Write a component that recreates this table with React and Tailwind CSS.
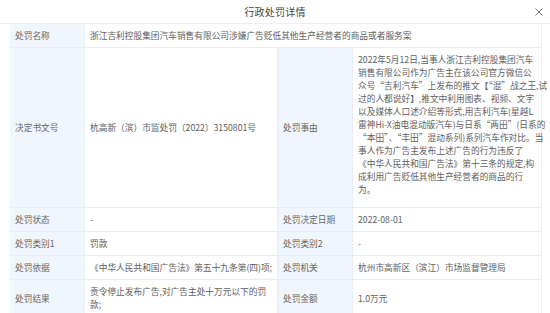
import React from "react";

const L = "bg-[#f0f6fd] text-[#666] px-[5px] py-[5px] border-b border-r border-[#e6edf5] flex items-center whitespace-nowrap";
const V = "bg-white text-[#606060] px-[5px] py-[5px] border-b border-r border-[#e6edf5] flex items-center whitespace-nowrap";

const reason = [
  "2022年5月12日,当事人浙江吉利控股集团汽车",
  "销售有限公司作为广告主在该公司官方微信公",
  "众号\u201c吉利汽车\u201d上发布的推文【\u201c混\u201d战之王,试",
  "过的人都说好】,推文中利用图表、视频、文字",
  "以及媒体人口述介绍等形式,用吉利汽车(星越L",
  "雷神Hi-X油电混动版汽车)与日系\u201c两田\u201d(日系的",
  "\u201c本田\u201d、\u201c丰田\u201d混动系列)系列汽车作对比。当",
  "事人作为广告主发布上述广告的行为违反了",
  "《中华人民共和国广告法》第十三条的规定,构",
  "成利用广告贬低其他生产经营者的商品的行",
  "为。",
];

export default function App() {
  return (
    <div
      className="w-[550px] h-[313px] bg-white overflow-hidden text-[8.7px] leading-[13px]"
      style={{ fontFamily: '"Noto Sans CJK SC", "Noto Sans", sans-serif' }}
    >
      <div className="h-[24px] border-b border-[#eceff3] grid grid-cols-[1fr_auto_1fr] items-center">
        <div />
        <div className="text-[10px] text-[#444] tracking-[0.2px]">行政处罚详情</div>
        <div className="flex justify-end pr-[7px]">
          <svg width="8" height="8" viewBox="0 0 8 8">
            <path d="M0.5 0.5 L7.5 7.5 M7.5 0.5 L0.5 7.5" stroke="#666" strokeWidth="0.9" fill="none" />
          </svg>
        </div>
      </div>
      <div className="pl-[10px] pr-[8px]">
        <div className="grid grid-cols-[75px_193px_75px_189px]">
          <div className={L}>处罚名称</div>
          <div className={V + " col-span-3"}>浙江吉利控股集团汽车销售有限公司涉嫌广告贬低其他生产经营者的商品或者服务案</div>

          <div className={L}>决定书文号</div>
          <div className={V}>杭高新（滨）市监处罚〔2022〕3150801号</div>
          <div className={L}>处罚事由</div>
          <div className="bg-white text-[#606060] px-[5px] pt-[5px] pb-[11px] border-b border-r border-[#e6edf5] whitespace-nowrap">
            {reason.map((t, i) => (
              <div key={i}>{t}</div>
            ))}
          </div>

          <div className={L}>处罚状态</div>
          <div className={V}>-</div>
          <div className={L}>处罚决定日期</div>
          <div className={V}>2022-08-01</div>

          <div className={L}>处罚类别1</div>
          <div className={V}>罚款</div>
          <div className={L}>处罚类别2</div>
          <div className={V}>-</div>

          <div className={L}>处罚依据</div>
          <div className={V}>《中华人民共和国广告法》第五十九条第(四)项;</div>
          <div className={L}>处罚机关</div>
          <div className={V}>杭州市高新区（滨江）市场监督管理局</div>

          <div className={L}>处罚结果</div>
          <div className="bg-white text-[#606060] px-[5px] py-[5px] border-b border-r border-[#e6edf5] whitespace-nowrap">
            <div>责令停止发布广告,对广告主处十万元以下的罚</div>
            <div>款;</div>
          </div>
          <div className={L}>处罚金额</div>
          <div className={V}>1.0万元</div>
        </div>
      </div>
    </div>
  );
}
